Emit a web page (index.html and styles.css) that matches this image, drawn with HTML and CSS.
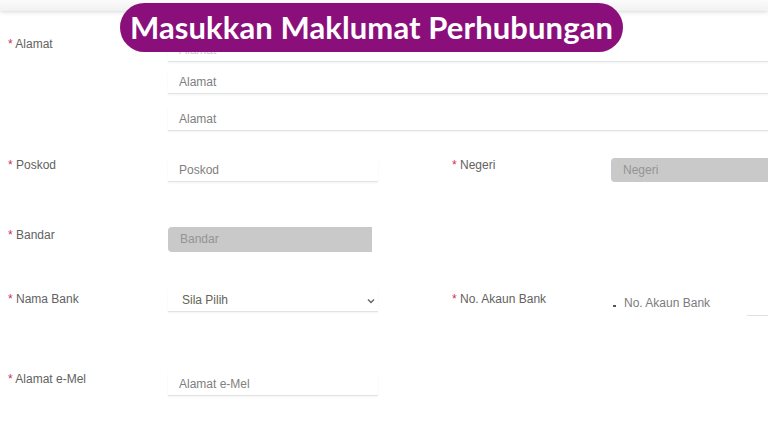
FILE: index.html
```html
<!DOCTYPE html>
<html lang="ms">
<head>
<meta charset="utf-8">
<title>Masukkan Maklumat Perhubungan</title>
<link rel="stylesheet" href="styles.css">
</head>
<body>
<div class="topbar"></div>
<div class="pill">Masukkan Maklumat Perhubungan</div>
<main class="form">
  <div class="row row-alamat">
    <label class="lbl"><span class="req">*</span> Alamat</label>
    <div class="stack">
      <div class="inp first">Alamat</div>
      <div class="inp second">Alamat</div>
      <div class="inp third">Alamat</div>
    </div>
  </div>

  <div class="row row-poskod">
    <label class="lbl"><span class="req">*</span> Poskod</label>
    <div class="inp short">Poskod</div>
    <span></span>
    <label class="lbl"><span class="req">*</span> Negeri</label>
    <div class="box wide">Negeri</div>
  </div>

  <div class="row row-bandar">
    <label class="lbl lbl-b"><span class="req">*</span> Bandar</label>
    <div class="box mid">Bandar</div>
  </div>

  <div class="row row-bank">
    <label class="lbl lbl-bank"><span class="req">*</span> Nama Bank</label>
    <div class="inp select"><span class="sel">Sila Pilih</span>
      <svg class="chev" width="8" height="6" viewBox="0 0 8 6"><path d="M1 1.5 L4 4.5 L7 1.5" fill="none" stroke="#666" stroke-width="1.4"/></svg>
    </div>
    <span></span>
    <label class="lbl lbl-bank"><span class="req">*</span> No. Akaun Bank</label>
    <div class="acct"><span class="tick"></span>No. Akaun Bank</div>
  </div>

  <div class="row row-email">
    <label class="lbl"><span class="req">*</span> Alamat e-Mel</label>
    <div class="inp short email">Alamat e-Mel</div>
  </div>
</main>
</body>
</html>
```

FILE: styles.css
```css
* { box-sizing: border-box; }
html, body { margin: 0; padding: 0; }
body {
  width: 768px;
  height: 432px;
  overflow: hidden;
  background: #ffffff;
  font-family: "Liberation Sans", Arial, sans-serif;
  font-size: 12px;
  color: #666;
  position: relative;
}
.topbar {
  height: 11px;
  background: linear-gradient(#fbfbfb, #f1f1f1);
  box-shadow: 0 1px 4px rgba(0,0,0,0.16);
}
.pill {
  position: absolute;
  left: 120px;
  top: 3px;
  width: 503px;
  height: 49px;
  border-radius: 25px;
  background: #8b0f7b;
  color: #ffffff;
  font-family: Lato, "Open Sans", sans-serif;
  font-weight: 700;
  font-size: 31px;
  line-height: 49px;
  text-align: center;
  letter-spacing: 0.1px;
  z-index: 2;
}
.form { display: block; }
.row {
  display: grid;
  grid-template-columns: 160px 210px 74px 159px 1fr;
  padding-left: 8px;
  align-items: start;
}
.lbl {
  line-height: 14px;
  font-size: 12px;
  color: #626262;
}
.req { color: #c8325a; }

.row-alamat { margin-top: 26px; }
.row-alamat .stack { grid-column: 2 / 6; padding-top: 1px; }
.inp {
  height: 24px;
  line-height: 24px;
  padding-left: 11px;
  color: #808080;
  border-bottom: 1px solid #e3e3e3;
  box-shadow: 0 1px 2px rgba(0,0,0,0.05);
}
.stack .second { margin-top: 8px; }
.stack .third { margin-top: 13px; }
.stack .first { color: #c9c9d6; }

.row-poskod { margin-top: 27px; }
.box {
  background: #c9c9c9;
  color: #949494;
  border-radius: 4px 0 0 4px;
  padding-left: 12px;
  line-height: 24px;
  height: 24px;
}

.row-bandar { margin-top: 45px; }
.lbl-b { margin-top: 1px; }
.box.mid { height: 25px; line-height: 25px; margin-right: 6px; }

.row-bank { margin-top: 37px; }
.lbl-bank { margin-top: 3px; }
.inp.select {
  display: flex;
  align-items: center;
  justify-content: space-between;
  height: 23px;
  padding-left: 14px;
  padding-right: 3px;
}
.sel { color: #626554; }
.chev { margin-top: 1px; }
.acct {
  height: 27px;
  padding-top: 7px;
  padding-left: 2px;
  line-height: 14px;
  color: #7c7c7c;
  background: linear-gradient(#e0e0e0, #e0e0e0) no-repeat right bottom / 21px 1px;
}
.tick {
  display: inline-block;
  width: 3px;
  height: 2px;
  background: #555;
  margin-right: 8px;
  vertical-align: 0px;
}

.row-email { margin-top: 56px; }
```
